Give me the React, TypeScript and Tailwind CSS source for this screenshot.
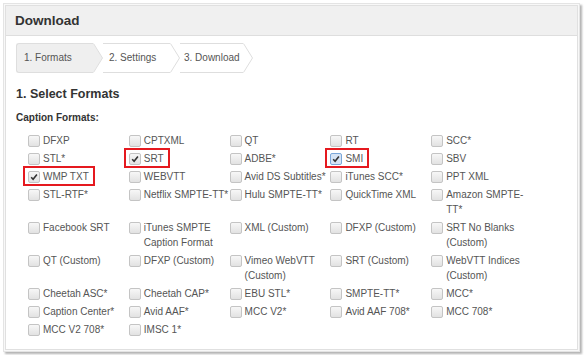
import React from "react";

type Item = { label: string; checked?: boolean; hl?: boolean; focus?: boolean };

const rows: Item[][] = [
  [{ label: "DFXP" }, { label: "CPTXML" }, { label: "QT" }, { label: "RT" }, { label: "SCC*" }],
  [{ label: "STL*" }, { label: "SRT", checked: true, hl: true }, { label: "ADBE*" }, { label: "SMI", checked: true, hl: true, focus: true }, { label: "SBV" }],
  [{ label: "WMP TXT", checked: true, hl: true }, { label: "WEBVTT" }, { label: "Avid DS Subtitles*" }, { label: "iTunes SCC*" }, { label: "PPT XML" }],
  [{ label: "STL-RTF*" }, { label: "Netflix SMPTE-TT*" }, { label: "Hulu SMPTE-TT*" }, { label: "QuickTime XML" }, { label: "Amazon SMPTE-TT*" }],
  [{ label: "Facebook SRT" }, { label: "iTunes SMPTE Caption Format" }, { label: "XML (Custom)" }, { label: "DFXP (Custom)" }, { label: "SRT No Blanks (Custom)" }],
  [{ label: "QT (Custom)" }, { label: "DFXP (Custom)" }, { label: "Vimeo WebVTT (Custom)" }, { label: "SRT (Custom)" }, { label: "WebVTT Indices (Custom)" }],
  [{ label: "Cheetah ASC*" }, { label: "Cheetah CAP*" }, { label: "EBU STL*" }, { label: "SMPTE-TT*" }, { label: "MCC*" }],
  [{ label: "Caption Center*" }, { label: "Avid AAF*" }, { label: "MCC V2*" }, { label: "Avid AAF 708*" }, { label: "MCC 708*" }],
  [{ label: "MCC V2 708*" }, { label: "IMSC 1*" }],
];

function Box({ checked, focus }: { checked?: boolean; focus?: boolean }) {
  return (
    <span
      className={
        "mt-[2px] flex h-[12px] w-[12px] shrink-0 items-center justify-center rounded-[2px] border " +
        (focus
          ? "border-[#7aa7d9] bg-[#d6e4f5]"
          : "border-[#c4c4c4] bg-gradient-to-b from-[#f7f7f7] to-[#e2e2e2]")
      }
    >
      {checked && (
        <svg width="8" height="8" viewBox="0 0 8 8" className="block">
          <path d="M1.2 4.2 L3.1 6.2 L6.9 1.4" fill="none" stroke="#333" strokeWidth="1.6" />
        </svg>
      )}
    </span>
  );
}

function Chevron({ fill }: { fill?: boolean }) {
  return (
    <svg width="10" height="30" viewBox="0 0 10 30" className="shrink-0 block">
      {fill && <polygon points="0,1 0.5,1 9.5,15 0.5,29 0,29" fill="#efefef" />}
      <polyline points="0.5,0.5 9.5,15 0.5,29.5" fill="none" stroke="#dedede" strokeWidth="1" />
    </svg>
  );
}

export default function App() {
  return (
    <div
      className="h-[355px] w-[585px] bg-white pl-[3px] pt-[3px]"
      style={{ fontFamily: '"Liberation Sans", Arial, sans-serif' }}
    >
      <div className="h-[349px] w-[577px] border border-[#e4e4e4] bg-[#f8f8f8] p-[1px] shadow-[2px_2px_2px_rgba(0,0,0,0.3)]">
        <div className="flex h-full flex-col border border-[#e0e0e0] bg-white">
          <div className="flex h-[30px] shrink-0 items-center border-b border-[#dedede] bg-[#f0f0f0] pl-[9px]">
            <span className="text-[13.5px] font-bold leading-none text-[#333]">Download</span>
          </div>
          <div className="pl-[10px]">
            <div className="mt-[7px] flex h-[30px] text-[10px] leading-none text-[#555]">
              <div className="flex w-[77px] items-center rounded-l-[3px] border-y border-l border-[#dedede] bg-[#efefef] pl-[7px]">
                1. Formats
              </div>
              <Chevron fill />
              <div className="flex w-[67px] items-center border-y border-[#dedede] pl-[6px]">2. Settings</div>
              <Chevron />
              <div className="flex w-[63px] items-center border-y border-[#dedede] pl-[4px]">3. Download</div>
              <Chevron />
            </div>
            <div className="mt-[13px] text-[12.5px] font-bold leading-[16px] text-[#333]">1. Select Formats</div>
            <div className="mt-[9px] text-[10px] font-bold leading-[13px] text-[#333]">Caption Formats:</div>
            <div className="ml-[12px] mt-[9px] grid w-[504px] grid-cols-5 text-[10px] leading-[15px] text-[#555]">
              {rows.flatMap((r, ri) =>
                r.map((it, ci) => (
                  <div key={ri + "-" + ci} className="flex items-start pb-[3px]">
                    <div className="relative flex items-start">
                      <Box checked={it.checked} focus={it.focus} />
                      <span className="ml-[3px] block">{it.label}</span>
                      {it.hl && (
                        <span className="pointer-events-none absolute -bottom-[2px] -left-[5px] -right-[6px] -top-[3px] border-2 border-[#e5191f]" />
                      )}
                    </div>
                  </div>
                ))
              )}
            </div>
          </div>
        </div>
      </div>
    </div>
  );
}
